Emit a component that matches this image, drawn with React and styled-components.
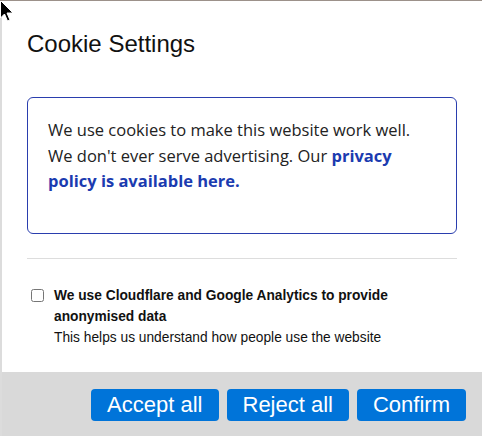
import React from 'react';
import styled, {createGlobalStyle} from 'styled-components';

const GlobalStyle = createGlobalStyle`
  html, body {
    margin: 0;
    padding: 0;
    background: #dcdcdc;
  }
  body {
    font-family: "Liberation Sans", Arial, sans-serif;
  }
`;

const Backdrop = styled.div`
  position: relative;
  width: 482px;
  height: 436px;
  overflow: hidden;
  border-top: 1px solid #9c918a;
  box-sizing: border-box;
  padding-left: 2px;
`;

const Modal = styled.div`
  display: flex;
  flex-direction: column;
  width: 480px;
  height: 435px;
  background: #fff;
`;

const Title = styled.h2`
  margin: 0;
  padding: 29px 25px 0;
  font-size: 24px;
  font-weight: 400;
  line-height: 28px;
  color: #111;
`;

const Body = styled.div`
  flex: 1;
  padding: 39px 25px 0;
`;

const Notice = styled.p`
  margin: 0;
  border: 1px solid #2a3eae;
  border-radius: 6px;
  padding: 19px 20px 39px;
  font-family: "Open Sans", sans-serif;
  font-size: 16.5px;
  line-height: 25.6px;
  color: #222;
`;

const Link = styled.a`
  color: #1b3bb0;
  font-weight: 700;
  text-decoration: none;
`;

const Divider = styled.hr`
  margin: 24px 0 0;
  border: 0;
  border-top: 1px solid #dddddd;
`;

const Option = styled.label`
  display: flex;
  align-items: flex-start;
  margin-top: 26px;
  font-size: 13.75px;
  line-height: 21px;
  color: #111;

  input {
    margin: 4px 3px 3px 4px;
    width: 13px;
    height: 13px;
    flex: none;
  }
`;

const OptionText = styled.div`
  padding-left: 7px;
`;

const OptionTitle = styled.div`
  font-weight: 700;
`;

const Footer = styled.div`
  display: flex;
  justify-content: flex-end;
  gap: 8px;
  height: 64px;
  box-sizing: border-box;
  padding: 17px 16px 0;
  background: #d9d9d9;
`;

const Button = styled.button`
  height: 32px;
  padding: 0 16px;
  border: 0;
  border-radius: 4px;
  background: #0074d9;
  color: #fff;
  font-family: "Liberation Sans", Arial, sans-serif;
  font-size: 22px;
  line-height: 26px;
  cursor: pointer;
`;

const Cursor = styled.svg`
  position: absolute;
  top: -1px;
  left: 0;
`;

export default function App() {
    return (
        <>
            <GlobalStyle />
            <Backdrop>
                <Modal>
                    <Title>Cookie Settings</Title>
                    <Body>
                        <Notice>
                            We use cookies to make this website work well. We don't ever serve advertising. Our{' '}
                            <Link href="#">privacy policy is available here.</Link>
                        </Notice>
                        <Divider />
                        <Option>
                            <input type="checkbox" />
                            <OptionText>
                                <OptionTitle>We use Cloudflare and Google Analytics to provide anonymised data</OptionTitle>
                                <div>This helps us understand how people use the website</div>
                            </OptionText>
                        </Option>
                    </Body>
                    <Footer>
                        <Button>Accept all</Button>
                        <Button>Reject all</Button>
                        <Button>Confirm</Button>
                    </Footer>
                </Modal>
                <Cursor width="16" height="24" viewBox="0 0 16 24">
                    <path d="M0.5 0.5 L0.5 18 L4.5 14 L7.5 21 L10 20 L7 13 L13 13 Z" fill="#000" stroke="#fff" strokeWidth="1" />
                </Cursor>
            </Backdrop>
        </>
    );
}
